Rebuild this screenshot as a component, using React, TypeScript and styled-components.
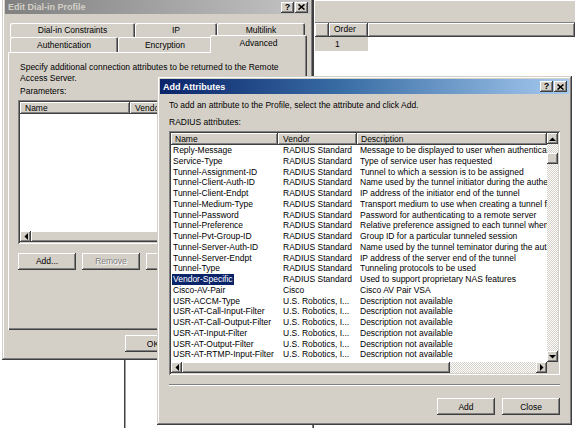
import * as React from "react";
import styled, { createGlobalStyle, css } from "styled-components";

const face = "#d4d0c8";

const GlobalStyle = createGlobalStyle`
  html, body {
    margin: 0;
    padding: 0;
    background: #fff;
  }
  body {
    font-family: "Liberation Sans", Arial, sans-serif;
    font-size: 8.5px;
    color: #000;
  }
  * {
    box-sizing: border-box;
  }
`;

const raisedEdge = css`
  box-shadow: inset -1px -1px #404040, inset 1px 1px #fff, inset -2px -2px #808080, inset 2px 2px ${face};
`;

const windowEdge = css`
  box-shadow: inset -1px -1px #404040, inset 1px 1px ${face}, inset -2px -2px #808080, inset 2px 2px #fff;
`;

const sunkenEdge = css`
  box-shadow: inset 1px 1px #808080, inset -1px -1px #fff, inset 2px 2px #404040, inset -2px -2px ${face};
`;

const hatch = css`
  background: repeating-conic-gradient(${face} 0 25%, #fff 0 50%) 0 0 / 2px 2px;
`;

const Desktop = styled.div`
  position: relative;
  width: 575px;
  height: 428px;
  overflow: hidden;
  background: #fff;
`;

// splitter of the console window that peeks out under the dialogs
const Splitter = styled.div`
  position: absolute;
  left: 124px;
  top: 0;
  bottom: 0;
  width: 2px;
  border-left: 1px solid #404040;
  background: #a0a0a0;
`;

const Console = styled.div`
  position: absolute;
  left: 312px;
  top: 0;
  right: 0;
  bottom: 0;
  display: flex;
  flex-direction: column;
  background: #fff;
  border-left: 1px solid #808080;
  box-shadow: inset 1px 0 #404040;
  padding-left: 2px;
`;

const ConsoleToolbar = styled.div`
  height: 22px;
  background: ${face};
  border-top: 1px solid #fff;
`;

const ConsoleHeader = styled.div`
  display: flex;
  height: 15px;
  background: ${face};
  border-top: 1px solid #808080;
`;

const ConsoleRow = styled.div`
  display: flex;
  height: 14px;
  line-height: 14px;
`;

const ConsoleCell = styled.div<{ $width: number }>`
  width: ${p => p.$width}px;
  padding-left: 6px;
  background: ${face};
`;

const Window = styled.div<{ $left: number; $top: number; $width: number; $height: number }>`
  position: absolute;
  left: ${p => p.$left}px;
  top: ${p => p.$top}px;
  width: ${p => p.$width}px;
  height: ${p => p.$height}px;
  padding: 3px;
  display: flex;
  flex-direction: column;
  background: ${face};
  ${windowEdge}
`;

const TitleBar = styled.div<{ $active?: boolean }>`
  flex: none;
  height: ${p => (p.$active ? 15 : 14)}px;
  display: flex;
  align-items: center;
  justify-content: space-between;
  padding: 0 2px 0 3px;
  background: ${p =>
    p.$active ? "linear-gradient(90deg, #0a246a 0%, #3a6ea5 45%, #a6caf0 100%)" : "linear-gradient(90deg, #808080, #c4c4c4)"};
  color: ${p => (p.$active ? "#fff" : face)};
  font-size: 9px;
  font-weight: bold;
  white-space: nowrap;
`;

const CaptionButtons = styled.div`
  display: flex;
  gap: 1px;
`;

const CaptionButton = styled.div`
  width: 13px;
  height: 11px;
  display: flex;
  align-items: center;
  justify-content: center;
  background: ${face};
  color: #000;
  font-size: 9px;
  font-weight: bold;
  line-height: 11px;
  ${raisedEdge}
`;

const CloseGlyph = () => (
  <svg width="7" height="6" viewBox="0 0 7 6">
    <path d="M0.5 0.5 L6.5 5.5 M6.5 0.5 L0.5 5.5" stroke="#000" strokeWidth="1.6" />
  </svg>
);

const Caption = () => (
  <CaptionButtons>
    <CaptionButton>?</CaptionButton>
    <CaptionButton>
      <CloseGlyph />
    </CaptionButton>
  </CaptionButtons>
);

/* ---- Edit Dial-in Profile ---- */

const EditBody = styled.div`
  flex: 1;
  display: flex;
  flex-direction: column;
  padding: 9px 3px 0 3px;
`;

const TabRow = styled.div<{ $height: number }>`
  display: flex;
  height: ${p => p.$height}px;
  padding: 0 2px;
`;

const Tab = styled.div<{ $width: number; $selected?: boolean }>`
  flex: none;
  width: ${p => p.$width}px;
  display: flex;
  align-items: center;
  justify-content: center;
  background: ${face};
  border-radius: 2px 2px 0 0;
  box-shadow: inset 1px 1px #fff, inset -1px 0 #404040, inset -2px 0 #808080;
  white-space: nowrap;
  ${p =>
    p.$selected &&
    css`
      position: relative;
      z-index: 1;
      margin: -2px -2px -1px -2px;
      width: ${p.$width + 4}px;
      padding-bottom: 2px;
    `}
`;

const TabPanel = styled.div`
  flex: none;
  height: 278px;
  display: flex;
  flex-direction: column;
  padding: 10px 10px 0 10px;
  background: ${face};
  box-shadow: inset 1px 1px #fff, inset -1px -1px #404040, inset -2px -2px #808080;
`;

const Label = styled.div<{ $gap?: number; $indent?: number }>`
  margin-top: ${p => p.$gap ?? 0}px;
  padding-left: ${p => p.$indent ?? 2}px;
  line-height: 10.5px;
  white-space: nowrap;
`;

const ListFrame = styled.div<{ $height: number; $top: number; $vscroll?: boolean }>`
  flex: none;
  height: ${p => p.$height}px;
  margin-top: ${p => p.$top}px;
  padding: 2px;
  display: grid;
  grid-template-columns: ${p => (p.$vscroll ? "minmax(0, 1fr) 11px" : "minmax(0, 1fr)")};
  grid-template-rows: minmax(0, 1fr) 11px;
  background: #fff;
  ${sunkenEdge}
`;

const ListClient = styled.div`
  min-width: 0;
  overflow: hidden;
  display: flex;
  flex-direction: column;
`;

const ColumnHeader = styled.div`
  flex: none;
  display: flex;
  height: 12px;
`;

const HeaderCell = styled.div<{ $width?: number; $pad: number }>`
  flex: ${p => (p.$width ? "none" : "1")};
  width: ${p => (p.$width ? `${p.$width}px` : "auto")};
  padding-left: ${p => p.$pad}px;
  line-height: 12px;
  white-space: nowrap;
  overflow: hidden;
  background: ${face};
  box-shadow: inset -1px -1px #404040, inset 1px 1px #fff, inset -2px -2px #808080;
`;

const Row = styled.div`
  display: flex;
  height: 10.75px;
  line-height: 10.75px;
  white-space: nowrap;
`;

const Cell = styled.div<{ $width: number; $pad: number }>`
  flex: none;
  width: ${p => p.$width}px;
  padding-left: ${p => p.$pad}px;
  overflow: hidden;
`;

const Selected = styled.span`
  display: inline-block;
  padding: 0 1px;
  margin-left: -1px;
  background: #0a246a;
  color: #fff;
`;

const VScroll = styled.div`
  display: flex;
  flex-direction: column;
  ${hatch}
`;

const HScroll = styled.div`
  display: flex;
  ${hatch}
`;

const ScrollButton = styled.div`
  flex: none;
  width: 11px;
  height: 11px;
  display: flex;
  align-items: center;
  justify-content: center;
  background: ${face};
  ${raisedEdge}
`;

const VThumb = styled.div<{ $offset: number; $size: number }>`
  flex: none;
  margin-top: ${p => p.$offset}px;
  height: ${p => p.$size}px;
  background: ${face};
  ${raisedEdge}
`;

const HThumb = styled.div<{ $size: number }>`
  flex: none;
  width: ${p => p.$size}px;
  background: ${face};
  ${raisedEdge}
`;

const Spacer = styled.div`
  flex: 1;
`;

const Corner = styled.div`
  background: ${face};
`;

const Arrow = ({ dir }: { dir: "up" | "down" | "left" | "right" }) => {
  const pts = {
    up: "0,4 3.5,0.5 7,4",
    down: "0,0 7,0 3.5,3.5",
    left: "4,0 4,7 0.5,3.5",
    right: "0,0 3.5,3.5 0,7",
  }[dir];
  const vertical = dir === "up" || dir === "down";
  return (
    <svg width={vertical ? 7 : 4} height={vertical ? 4 : 7} viewBox={vertical ? "0 0 7 4" : "0 0 4 7"}>
      <polygon points={pts} fill="#000" />
    </svg>
  );
};

const ButtonRow = styled.div<{ $gap: number; $top: number; $right?: boolean }>`
  display: flex;
  gap: ${p => p.$gap}px;
  margin-top: ${p => p.$top}px;
  justify-content: ${p => (p.$right ? "flex-end" : "flex-start")};
`;

const PushButton = styled.button<{ $width: number; $disabled?: boolean }>`
  flex: none;
  width: ${p => p.$width}px;
  height: 17px;
  padding: 0;
  border: 0;
  font: inherit;
  display: flex;
  align-items: center;
  justify-content: center;
  background: ${face};
  color: ${p => (p.$disabled ? "#808080" : "#000")};
  text-shadow: ${p => (p.$disabled ? "1px 1px #fff" : "none")};
  ${raisedEdge}
`;

const Footer = styled.div`
  display: flex;
  justify-content: flex-end;
  gap: 6px;
  margin-top: 5px;
  padding-right: 2px;
`;

/* ---- Add Attributes ---- */

const AddBody = styled.div`
  flex: 1;
  display: flex;
  flex-direction: column;
  padding: 6px 9px 0 9px;
`;

const Separator = styled.div`
  height: 2px;
  margin-top: 9px;
  border-top: 1px solid #808080;
  border-bottom: 1px solid #fff;
`;

const USR = "U.S. Robotics, I...";
const NA = "Description not available";

const attributes: [string, string, string][] = [
  ["Reply-Message", "RADIUS Standard", "Message to be displayed to user when authenticating"],
  ["Service-Type", "RADIUS Standard", "Type of service user has requested"],
  ["Tunnel-Assignment-ID", "RADIUS Standard", "Tunnel to which a session is to be assigned"],
  ["Tunnel-Client-Auth-ID", "RADIUS Standard", "Name used by the tunnel initiator during the authentication phase"],
  ["Tunnel-Client-Endpt", "RADIUS Standard", "IP address of the initiator end of the tunnel"],
  ["Tunnel-Medium-Type", "RADIUS Standard", "Transport medium to use when creating a tunnel for protocols"],
  ["Tunnel-Password", "RADIUS Standard", "Password for authenticating to a remote server"],
  ["Tunnel-Preference", "RADIUS Standard", "Relative preference assigned to each tunnel when more than one"],
  ["Tunnel-Pvt-Group-ID", "RADIUS Standard", "Group ID for a particular tunneled session"],
  ["Tunnel-Server-Auth-ID", "RADIUS Standard", "Name used by the tunnel teminator during the authentication phase"],
  ["Tunnel-Server-Endpt", "RADIUS Standard", "IP address of the server end of the tunnel"],
  ["Tunnel-Type", "RADIUS Standard", "Tunneling protocols to be used"],
  ["Vendor-Specific", "RADIUS Standard", "Used to support proprietary NAS features"],
  ["Cisco-AV-Pair", "Cisco", "Cisco AV Pair VSA"],
  ["USR-ACCM-Type", USR, NA],
  ["USR-AT-Call-Input-Filter", USR, NA],
  ["USR-AT-Call-Output-Filter", USR, NA],
  ["USR-AT-Input-Filter", USR, NA],
  ["USR-AT-Output-Filter", USR, NA],
  ["USR-AT-RTMP-Input-Filter", USR, NA],
];

const selectedName = "Vendor-Specific";

export default function App() {
  return (
    <Desktop>
      <GlobalStyle />
      <Splitter />

      <Console>
        <ConsoleToolbar />
        <ConsoleHeader>
          <HeaderCell $width={14} $pad={4} />
          <HeaderCell $width={39} $pad={5}>Order</HeaderCell>
          <HeaderCell $pad={5} />
        </ConsoleHeader>
        <ConsoleRow>
          <ConsoleCell $width={14} />
          <ConsoleCell $width={39}>1</ConsoleCell>
        </ConsoleRow>
      </Console>

      <Window $left={2} $top={-3} $width={311} $height={363}>
        <TitleBar>
          <span>Edit Dial-in Profile</span>
          <Caption />
        </TitleBar>
        <EditBody>
          <TabRow $height={14}>
            <Tab $width={125}>Dial-in Constraints</Tab>
            <Tab $width={82}>IP</Tab>
            <Tab $width={88}>Multilink</Tab>
          </TabRow>
          <TabRow $height={15}>
            <Tab $width={108}>Authentication</Tab>
            <Tab $width={94}>Encryption</Tab>
            <Tab $width={93} $selected>Advanced</Tab>
          </TabRow>
          <TabPanel>
            <Label>
              Specify additional connection attributes to be returned to the Remote
              <br />
              Access Server.
            </Label>
            <Label $gap={3}>Parameters:</Label>
            <ListFrame $height={144} $top={3}>
              <ListClient>
                <ColumnHeader>
                  <HeaderCell $width={110} $pad={5}>Name</HeaderCell>
                  <HeaderCell $width={90} $pad={5}>Vendor</HeaderCell>
                  <HeaderCell $pad={5}>Value</HeaderCell>
                </ColumnHeader>
              </ListClient>
              <HScroll>
                <ScrollButton>
                  <Arrow dir="left" />
                </ScrollButton>
                <HThumb $size={240} />
                <Spacer />
                <ScrollButton>
                  <Arrow dir="right" />
                </ScrollButton>
              </HScroll>
            </ListFrame>
            <ButtonRow $gap={6} $top={9}>
              <PushButton $width={58}>Add...</PushButton>
              <PushButton $width={58} $disabled>Remove</PushButton>
              <PushButton $width={58} $disabled>Edit...</PushButton>
            </ButtonRow>
          </TabPanel>
          <Footer>
            <PushButton $width={56}>OK</PushButton>
            <PushButton $width={56}>Cancel</PushButton>
            <PushButton $width={56}>Apply</PushButton>
          </Footer>
        </EditBody>
      </Window>

      <Window $left={157} $top={76} $width={415} $height={349}>
        <TitleBar $active>
          <span>Add Attributes</span>
          <Caption />
        </TitleBar>
        <AddBody>
          <Label $indent={0}>
            To add an attribute to the Profile, select the attribute and click Add.
          </Label>
          <Label $gap={6.5} $indent={0}>RADIUS attributes:</Label>
          <ListFrame $height={244} $top={3.5} $vscroll>
            <ListClient>
              <ColumnHeader>
                <HeaderCell $width={107} $pad={4}>Name</HeaderCell>
                <HeaderCell $width={79} $pad={5}>Vendor</HeaderCell>
                <HeaderCell $pad={4}>Description</HeaderCell>
              </ColumnHeader>
              {attributes.map(([name, vendor, desc]) => (
                <Row key={name}>
                  <Cell $width={107} $pad={2}>
                    {name === selectedName ? <Selected>{name}</Selected> : name}
                  </Cell>
                  <Cell $width={79} $pad={5}>{vendor}</Cell>
                  <Cell $width={320} $pad={3}>{desc}</Cell>
                </Row>
              ))}
            </ListClient>
            <VScroll>
              <ScrollButton>
                <Arrow dir="up" />
              </ScrollButton>
              <VThumb $offset={9} $size={11} />
              <Spacer />
              <ScrollButton>
                <Arrow dir="down" />
              </ScrollButton>
            </VScroll>
            <HScroll>
              <ScrollButton>
                <Arrow dir="left" />
              </ScrollButton>
              <HThumb $size={268} />
              <Spacer />
              <ScrollButton>
                <Arrow dir="right" />
              </ScrollButton>
            </HScroll>
            <Corner />
          </ListFrame>
          <Separator />
          <ButtonRow $gap={7} $top={12} $right>
            <PushButton $width={58}>Add</PushButton>
            <PushButton $width={58}>Close</PushButton>
          </ButtonRow>
        </AddBody>
      </Window>
    </Desktop>
  );
}
